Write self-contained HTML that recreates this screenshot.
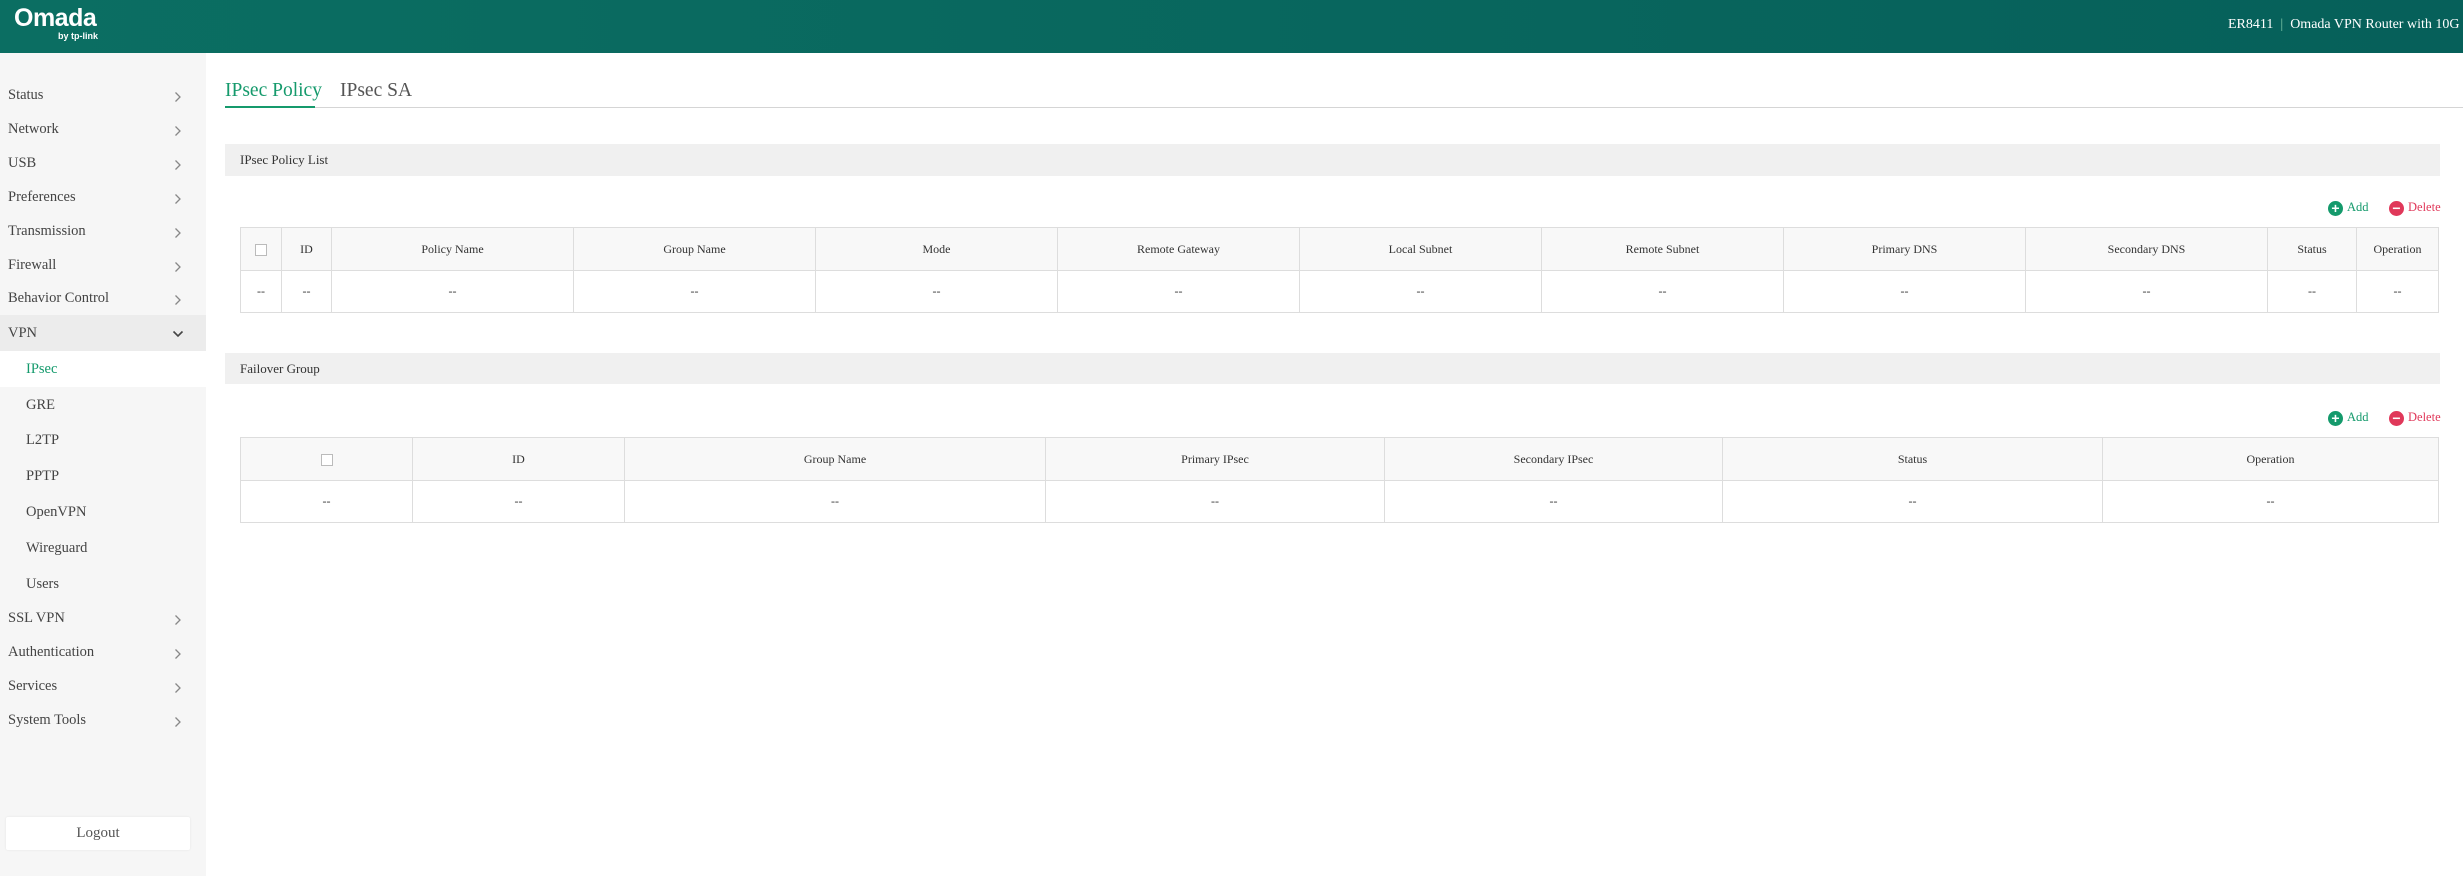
<!DOCTYPE html>
<html><head><meta charset="utf-8"><style>
*{margin:0;padding:0;box-sizing:border-box}
body{width:2463px;height:876px;overflow:hidden;background:#fff;font-family:"Liberation Serif",serif;color:#333;position:relative}
.hdr{position:absolute;left:0;top:0;width:2463px;height:53px;background:linear-gradient(90deg,#0b6e62,#06605a)}
.logo{position:absolute;left:14px;top:5px;color:#fff;font-family:"Liberation Sans",sans-serif;font-weight:bold;font-size:25px;line-height:26px;letter-spacing:-0.5px}
.by{position:absolute;left:58px;top:31px;color:#fff;font-family:"Liberation Sans",sans-serif;font-size:9px;line-height:10px;font-weight:bold}
.title{position:absolute;left:2228px;top:17px;color:#fff;font-size:14px;white-space:nowrap}
.side{position:absolute;left:0;top:53px;width:206px;height:823px;background:#f6f6f6}
.mi{position:absolute;left:0;width:206px;height:34px;line-height:34px;padding-left:8px;font-size:14.5px;color:#444}
.mi.sub{padding-left:26px}
.mi svg{position:absolute;left:174px;top:13px}
.vpn{background:#ececec}
.act{background:#fff;color:#149a6c}
.logout{position:absolute;left:6px;top:817px;width:184px;height:33px;background:#fff;border-radius:2px;box-shadow:0 0 2px rgba(0,0,0,.08);text-align:center;line-height:33px;font-size:15px;color:#555}
.tab{position:absolute;top:80px;font-size:19.5px}
.bar{position:absolute;left:225px;width:2215px;height:32px;background:#f0f0f0;font-size:13px;line-height:32px;padding-left:15px}
table{position:absolute;left:240px;width:2198px;border-collapse:collapse;table-layout:fixed;font-size:12px}
td,th{border:1px solid #ddd;text-align:center;font-weight:normal;color:#333}
th{background:#f8f8f8;height:43px}
td{height:42px}
.cb{display:inline-block;width:12px;height:12px;border:1px solid #bbb;background:#fff;vertical-align:middle}
.act2{position:absolute;font-size:12.5px;height:16px;line-height:16px}
.ic{display:inline-block;width:15px;height:15px;border-radius:50%;color:#fff;text-align:center;line-height:15px;font-family:"Liberation Sans",sans-serif;font-weight:bold;font-size:14px;vertical-align:middle;margin-right:4px}
</style></head><body>
<div class="hdr"><div class="logo">Omada</div><div class="by">by tp-link</div><div class="title">ER8411 &nbsp;<span style="color:#7fc8a9">|</span>&nbsp; Omada VPN Router with 10G</div></div>
<div class="side">
<div class="mi" style="top:25px">Status<svg width="8" height="12"><path d="M1.5 1.5L6 6l-4.5 4.5" stroke="#888" stroke-width="1.3" fill="none"/></svg></div>
<div class="mi" style="top:59px">Network<svg width="8" height="12"><path d="M1.5 1.5L6 6l-4.5 4.5" stroke="#888" stroke-width="1.3" fill="none"/></svg></div>
<div class="mi" style="top:93px">USB<svg width="8" height="12"><path d="M1.5 1.5L6 6l-4.5 4.5" stroke="#888" stroke-width="1.3" fill="none"/></svg></div>
<div class="mi" style="top:127px">Preferences<svg width="8" height="12"><path d="M1.5 1.5L6 6l-4.5 4.5" stroke="#888" stroke-width="1.3" fill="none"/></svg></div>
<div class="mi" style="top:161px">Transmission<svg width="8" height="12"><path d="M1.5 1.5L6 6l-4.5 4.5" stroke="#888" stroke-width="1.3" fill="none"/></svg></div>
<div class="mi" style="top:195px">Firewall<svg width="8" height="12"><path d="M1.5 1.5L6 6l-4.5 4.5" stroke="#888" stroke-width="1.3" fill="none"/></svg></div>
<div class="mi" style="top:228px">Behavior Control<svg width="8" height="12"><path d="M1.5 1.5L6 6l-4.5 4.5" stroke="#888" stroke-width="1.3" fill="none"/></svg></div>
<div class="mi vpn" style="top:262px;height:36px;line-height:36px">VPN<svg width="12" height="8" style="left:172px;top:15px"><path d="M1.5 1.5L6 6l4.5-4.5" stroke="#444" stroke-width="1.6" fill="none"/></svg></div>
<div class="mi sub act" style="top:298px;height:36px;line-height:36px">IPsec</div>
<div class="mi sub" style="top:334px;height:36px;line-height:36px">GRE</div>
<div class="mi sub" style="top:369px;height:36px;line-height:36px">L2TP</div>
<div class="mi sub" style="top:405px;height:36px;line-height:36px">PPTP</div>
<div class="mi sub" style="top:441px;height:36px;line-height:36px">OpenVPN</div>
<div class="mi sub" style="top:477px;height:36px;line-height:36px">Wireguard</div>
<div class="mi sub" style="top:513px;height:36px;line-height:36px">Users</div>
<div class="mi" style="top:548px">SSL VPN<svg width="8" height="12"><path d="M1.5 1.5L6 6l-4.5 4.5" stroke="#888" stroke-width="1.3" fill="none"/></svg></div>
<div class="mi" style="top:582px">Authentication<svg width="8" height="12"><path d="M1.5 1.5L6 6l-4.5 4.5" stroke="#888" stroke-width="1.3" fill="none"/></svg></div>
<div class="mi" style="top:616px">Services<svg width="8" height="12"><path d="M1.5 1.5L6 6l-4.5 4.5" stroke="#888" stroke-width="1.3" fill="none"/></svg></div>
<div class="mi" style="top:650px">System Tools<svg width="8" height="12"><path d="M1.5 1.5L6 6l-4.5 4.5" stroke="#888" stroke-width="1.3" fill="none"/></svg></div>
</div>
<div class="logout">Logout</div>
<div class="tab" style="left:225px;color:#159a6c">IPsec Policy</div>
<div class="tab" style="left:340px;color:#555">IPsec SA</div>
<div style="position:absolute;left:225px;top:107px;width:2238px;height:1px;background:#d5d5d5"></div>
<div style="position:absolute;left:225px;top:106px;width:90px;height:2px;background:#159a6c"></div>
<div class="bar" style="top:144px">IPsec Policy List</div>
<div class="act2" style="left:2328px;top:199px;color:#159a6c"><span class="ic" style="background:#159a6c">+</span>Add</div>
<div class="act2" style="left:2389px;top:199px;color:#e0385a"><span class="ic" style="background:#e0385a">&minus;</span>Delete</div>
<table style="top:227px">
<colgroup><col style="width:41px"><col style="width:50px"><col style="width:242px"><col style="width:242px"><col style="width:242px"><col style="width:242px"><col style="width:242px"><col style="width:242px"><col style="width:242px"><col style="width:242px"><col style="width:89px"><col style="width:82px"></colgroup>
<tr><th><span class="cb"></span></th><th>ID</th><th>Policy Name</th><th>Group Name</th><th>Mode</th><th>Remote Gateway</th><th>Local Subnet</th><th>Remote Subnet</th><th>Primary DNS</th><th>Secondary DNS</th><th>Status</th><th>Operation</th></tr>
<tr><td>--</td><td>--</td><td>--</td><td>--</td><td>--</td><td>--</td><td>--</td><td>--</td><td>--</td><td>--</td><td>--</td><td>--</td></tr>
</table>
<div class="bar" style="top:353px;height:31px;line-height:31px">Failover Group</div>
<div class="act2" style="left:2328px;top:409px;color:#159a6c"><span class="ic" style="background:#159a6c">+</span>Add</div>
<div class="act2" style="left:2389px;top:409px;color:#e0385a"><span class="ic" style="background:#e0385a">&minus;</span>Delete</div>
<table style="top:437px">
<colgroup><col style="width:172px"><col style="width:212px"><col style="width:421px"><col style="width:339px"><col style="width:338px"><col style="width:380px"><col style="width:336px"></colgroup>
<tr><th><span class="cb"></span></th><th>ID</th><th>Group Name</th><th>Primary IPsec</th><th>Secondary IPsec</th><th>Status</th><th>Operation</th></tr>
<tr><td>--</td><td>--</td><td>--</td><td>--</td><td>--</td><td>--</td><td>--</td></tr>
</table>
</body></html>
